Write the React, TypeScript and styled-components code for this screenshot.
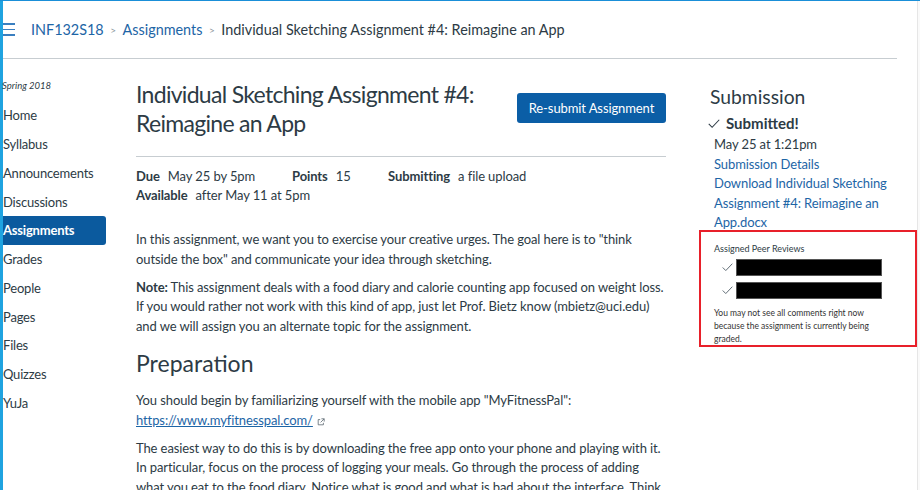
import React from "react";
import styled, { createGlobalStyle } from "styled-components";

const Global = createGlobalStyle`
  html, body { margin: 0; padding: 0; background: #fff; }
  body { font-family: Lato, "Noto Sans", sans-serif; color: #2d3b45; }
  * { box-sizing: border-box; }
`;

const Frame = styled.div`
  width: 920px;
  height: 490px;
  overflow: hidden;
  display: flex;
  border-top: 1px solid #1a8fd8;
`;

const Stripe = styled.div`
  width: 3px;
  flex: none;
  background: #1fa3e0;
`;

const Main = styled.div`
  flex: 1;
  display: flex;
  flex-direction: column;
  min-width: 0;
`;

const ScrollEdge = styled.div`
  width: 3px;
  flex: none;
  border-left: 1px solid #e6e6e6;
  background: #fafafa;
`;

const Header = styled.header`
  flex: none;
  height: 58px;
  margin-right: 20px;
  display: flex;
  align-items: center;
  border-bottom: 1px solid #c7cdd1;
`;

const Burger = styled.div`
  width: 12px;
  display: flex;
  flex-direction: column;
  gap: 4px;
  margin-right: 16px;
  & > span { display: block; height: 1.5px; background: #3a7fc0; }
`;

const Crumb = styled.a<{ $current?: boolean }>`
  font-size: 14.4px;
  color: ${(p) => (p.$current ? "#2d3b45" : "#1d65a6")};
  text-decoration: none;
`;

const Sep = styled.span`
  color: #8b969e;
  font-size: 10px;
  margin: 0 6.5px;
`;

const Body = styled.div`
  display: grid;
  grid-template-columns: 133px 530px 218px;
  column-gap: 0;
  & > :nth-child(3) { margin-left: 33px; }
`;

const Side = styled.nav`
  display: flex;
  flex-direction: column;
  padding-top: 20px;
`;

const Term = styled.div`
  font-size: 9.5px;
  font-style: italic;
  color: #2d3b45;
  margin-left: -1px;
  height: 14px;
  line-height: 14px;
  margin-bottom: 8px;
`;

const NavItem = styled.a<{ $active?: boolean }>`
  display: flex;
  align-items: center;
  height: 28.75px;
  width: 103px;
  font-size: 13px;
  letter-spacing: -0.2px;
  color: ${(p) => (p.$active ? "#fff" : "#2d3b45")};
  background: ${(p) => (p.$active ? "#0b5a9e" : "transparent")};
  border-radius: 0 3px 3px 0;
  font-weight: ${(p) => (p.$active ? 700 : 400)};
  text-decoration: none;
`;

const Content = styled.main`
  padding-top: 21px;
`;

const TitleRow = styled.div`
  display: flex;
  justify-content: space-between;
  align-items: flex-start;
`;

const Title = styled.h1`
  margin: 0;
  font-size: 23px;
  letter-spacing: -0.7px;
  font-weight: 400;
  line-height: 29px;
  width: 360px;
`;

const Button = styled.button`
  margin-top: 13px;
  height: 30px;
  width: 149px;
  border: none;
  border-radius: 3px;
  background: #0b5ea6;
  color: #fff;
  font-family: Lato, sans-serif;
  font-size: 13px;
  letter-spacing: -0.1px;
  padding: 0;
`;

const Rule = styled.hr`
  border: none;
  border-top: 1px solid #c7cdd1;
  margin: 18px 0 10px;
`;

const Details = styled.div`
  display: flex;
  flex-wrap: wrap;
  font-size: 13px;
  letter-spacing: -0.1px;
  line-height: 19px;
  width: 420px;
`;

const Detail = styled.span<{ $w?: number }>`
  width: ${(p) => (p.$w ? `${p.$w}px` : "auto")};
  & b { font-weight: 700; margin-right: 8px; }
`;

const Para = styled.p`
  font-size: 13px;
  letter-spacing: -0.1px;
  line-height: 19.5px;
  margin: 0 0 8.5px;
`;

const Intro = styled.div`
  margin-top: 25px;
  width: 532px;
`;

const H2 = styled.h2`
  font-size: 23px;
  font-weight: 400;
  margin: 12px 0 13px;
  line-height: 30px;
`;

const Link = styled.a`
  color: #1d65a6;
  text-decoration: underline;
`;

const ExtIcon = styled.svg`
  width: 8px;
  height: 8px;
  margin-left: 4px;
  vertical-align: -1px;
`;

const Aside = styled.aside`
  padding-top: 26px;
  display: flex;
  flex-direction: column;
`;

const AsideTitle = styled.h2`
  margin: 0 0 0 11px;
  font-size: 19.3px;
  font-weight: 400;
  line-height: 24px;
`;

const Submitted = styled.div`
  display: flex;
  align-items: center;
  font-size: 15px;
  font-weight: 700;
  margin: 4px 0 0 9px;
  line-height: 20px;
  & svg { margin-right: 6px; }
`;

const SubLines = styled.div`
  padding-left: 15px;
  margin-top: 2px;
  font-size: 13px;
  letter-spacing: -0.1px;
  line-height: 19.5px;
  width: 200px;
`;

const SubLink = styled.a`
  display: block;
  color: #1d65a6;
  text-decoration: none;
`;

const PeerBox = styled.div`
  margin-top: -3px;
  width: 218px;
  height: 117px;
  border: 2px solid #e8202a;
  padding: 11px 0 0 13px;
`;

const PeerTitle = styled.div`
  font-size: 9px;
  color: #2d3b45;
  line-height: 12px;
`;

const PeerRow = styled.div`
  display: flex;
  align-items: center;
  margin-left: 8px;
  height: 17px;
  margin-top: 4px;
  & + & { margin-top: 6px; }
`;

const Redacted = styled.div`
  width: 146px;
  height: 17px;
  background: #000;
  border: 1px solid #555;
  margin-left: 3px;
`;

const PeerNote = styled.div`
  margin-top: 8px;
  font-size: 8.5px;
  line-height: 13px;
  color: #333;
  width: 172px;
`;

const Check = ({ size = 12, color = "#2d3b45" }: { size?: number; color?: string }) => (
  <svg width={size} height={size * 0.75} viewBox="0 0 16 12" fill="none">
    <path d="M1 6.5 L5.5 11 L15 1" stroke={color} strokeWidth="1.4" />
  </svg>
);

const nav = [
  "Home",
  "Syllabus",
  "Announcements",
  "Discussions",
  "Assignments",
  "Grades",
  "People",
  "Pages",
  "Files",
  "Quizzes",
  "YuJa",
];

export default function App() {
  return (
    <>
      <Global />
      <Frame>
        <Stripe />
        <Main>
          <Header>
            <Burger>
              <span />
              <span />
              <span />
            </Burger>
            <Crumb href="#">INF132S18</Crumb>
            <Sep>&gt;</Sep>
            <Crumb href="#">Assignments</Crumb>
            <Sep>&gt;</Sep>
            <Crumb $current>Individual Sketching Assignment #4: Reimagine an App</Crumb>
          </Header>
          <Body>
            <Side>
              <Term>Spring 2018</Term>
              {nav.map((n) => (
                <NavItem key={n} href="#" $active={n === "Assignments"}>
                  {n}
                </NavItem>
              ))}
            </Side>
            <Content>
              <TitleRow>
                <Title>Individual Sketching Assignment #4: Reimagine an App</Title>
                <Button>Re-submit Assignment</Button>
              </TitleRow>
              <Rule />
              <Details>
                <Detail $w={156}>
                  <b>Due</b>May 25 by 5pm
                </Detail>
                <Detail $w={96}>
                  <b>Points</b>15
                </Detail>
                <Detail>
                  <b>Submitting</b>a file upload
                </Detail>
                <Detail $w={300}>
                  <b>Available</b>after May 11 at 5pm
                </Detail>
              </Details>
              <Intro>
                <Para>
                  In this assignment, we want you to exercise your creative urges. The goal here is to "think outside
                  the box" and communicate your idea through sketching.
                </Para>
                <Para>
                  <b>Note:</b> This assignment deals with a food diary and calorie counting app focused on weight loss.
                  If you would rather not work with this kind of app, just let Prof. Bietz know (mbietz@uci.edu) and we
                  will assign you an alternate topic for the assignment.
                </Para>
                <H2>Preparation</H2>
                <Para>
                  You should begin by familiarizing yourself with the mobile app "MyFitnessPal":
                  <br />
                  <Link href="#">https://www.myfitnesspal.com/</Link>
                  <ExtIcon viewBox="0 0 10 10" fill="none" stroke="#5b6770" strokeWidth="1">
                    <path d="M4 2H1.5V8.5H8V6" />
                    <path d="M5.5 1H9V4.5M9 1L4.5 5.5" />
                  </ExtIcon>
                </Para>
                <Para>
                  The easiest way to do this is by downloading the free app onto your phone and playing with it. In
                  particular, focus on the process of logging your meals. Go through the process of adding what you eat
                  to the food diary. Notice what is good and what is bad about the interface. Think about how you might
                  improve it.
                </Para>
              </Intro>
            </Content>
            <Aside>
              <AsideTitle>Submission</AsideTitle>
              <Submitted>
                <Check size={12} />
                Submitted!
              </Submitted>
              <SubLines>
                <div>May 25 at 1:21pm</div>
                <SubLink href="#">Submission Details</SubLink>
                <SubLink href="#">Download Individual Sketching Assignment #4: Reimagine an App.docx</SubLink>
              </SubLines>
              <PeerBox>
                <PeerTitle>Assigned Peer Reviews</PeerTitle>
                <PeerRow>
                  <Check size={11} color="#5b6770" />
                  <Redacted />
                </PeerRow>
                <PeerRow>
                  <Check size={11} color="#5b6770" />
                  <Redacted />
                </PeerRow>
                <PeerNote>
                  You may not see all comments right now because the assignment is currently being graded.
                </PeerNote>
              </PeerBox>
            </Aside>
          </Body>
        </Main>
        <ScrollEdge />
      </Frame>
    </>
  );
}
